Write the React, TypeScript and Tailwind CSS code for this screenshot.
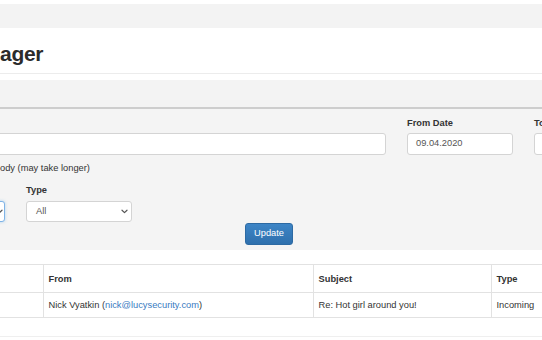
import React from "react";

function Chevron({ className }: { className?: string }) {
  return (
    <svg className={className} width="7" height="5" viewBox="0 0 7 5" fill="none">
      <path d="M1 1.2 L3.5 3.6 L6 1.2" stroke="#555" strokeWidth="1.2" strokeLinecap="round" strokeLinejoin="round" />
    </svg>
  );
}

function Label({ children }: { children: React.ReactNode }) {
  return <div className="text-[9.3px] font-bold leading-[13px] text-[#333] mb-[3px]">{children}</div>;
}

export default function App() {
  return (
    <div className="w-[542px] h-[340px] overflow-hidden bg-white text-[#333] font-['Liberation_Sans',Arial,sans-serif]">
      {/* ─── top bars ─────────────────────────────── */}
      <div className="h-[4px]" />
      <div className="h-[24px] bg-[#f3f3f3]" />
      <div className="h-[46px] border-b border-[#ececec] flex items-end">
        <h1 className="text-[21px] font-bold leading-none pb-[9px] text-[#2b2b2b] tracking-[-0.3px]">ager</h1>
      </div>
      <div className="h-[6px]" />
      <div className="h-[29px] bg-[#f3f3f3] border-b-2 border-[#cdcdcd]" />

      {/* ─── filter panel ─────────────────────────── */}
      <div className="h-[141px] bg-[#f4f4f4] pt-[8px]">
        <div className="flex gap-[21px]">
          <div className="-ml-[10px] w-[396px] shrink-0">
            <div className="h-[13px] mb-[3px]" />
            <div className="h-[22px] bg-white border border-[#d4d4d4] rounded-[3px]" />
            <div className="ml-[10px] mt-[7px] text-[9.3px] leading-[13px] text-[#333]">ody (may take longer)</div>
          </div>
          <div className="w-[106px] shrink-0">
            <Label>From Date</Label>
            <div className="h-[22px] bg-white border border-[#d4d4d4] rounded-[3px] flex items-center pl-[8px] text-[9.3px] text-[#555]">
              09.04.2020
            </div>
          </div>
          <div className="w-[80px] shrink-0">
            <Label>To</Label>
            <div className="h-[22px] bg-white border border-[#d4d4d4] rounded-[3px]" />
          </div>
        </div>

        <div className="flex gap-[21px] mt-[9px]">
          <div className="-ml-[100px] w-[105px] shrink-0">
            <div className="h-[13px] mb-[4px]" />
            <div className="h-[21px] bg-white border border-[#7fb3e6] rounded-[3px] flex items-center justify-end pr-[1px] shadow-[0_0_3px_rgba(102,175,233,0.5)]">
              <Chevron />
            </div>
          </div>
          <div className="w-[106px] shrink-0">
            <div className="text-[9.3px] font-bold leading-[13px] text-[#333] mb-[4px]">Type</div>
            <div className="h-[21px] bg-white border border-[#d4d4d4] rounded-[3px] flex items-center justify-between pl-[9px] pr-[3px] text-[9.3px] text-[#555]">
              <span>All</span>
              <Chevron />
            </div>
          </div>
        </div>

        <div className="ml-[245px] mt-[1px] w-[48px] h-[22px] rounded-[3px] bg-[linear-gradient(#3d85c6,#2f70ad)] border border-[#2d6aa3] flex items-center justify-center text-[9.3px] text-white">
          Update
        </div>
      </div>

      {/* ─── messages table ───────────────────────── */}
      <div className="h-[14px]" />
      <table className="border-collapse text-[9.3px] text-[#333] w-[600px] table-fixed">
        <colgroup>
          <col className="w-[43px]" />
          <col className="w-[270px]" />
          <col className="w-[178px]" />
          <col className="w-[109px]" />
        </colgroup>
        <thead>
          <tr className="h-[28px] border-t border-b border-[#e2e2e2]">
            <th className="border-r border-[#e2e2e2]" />
            <th className="text-left font-bold pl-[5px] pt-[2px] border-r border-[#e2e2e2]">From</th>
            <th className="text-left font-bold pl-[5px] pt-[2px] border-r border-[#e2e2e2]">Subject</th>
            <th className="text-left font-bold pl-[5px] pt-[2px]">Type</th>
          </tr>
        </thead>
        <tbody>
          <tr className="h-[25px] border-b border-[#e2e2e2]">
            <td className="border-r border-[#e2e2e2]" />
            <td className="pl-[5px] pt-[2px] border-r border-[#e2e2e2]">
              Nick Vyatkin (<span className="text-[#3a7bbf]">nick@lucysecurity.com</span>)
            </td>
            <td className="pl-[5px] pt-[2px] border-r border-[#e2e2e2]">Re: Hot girl around you!</td>
            <td className="pl-[5px] pt-[2px]">Incoming</td>
          </tr>
        </tbody>
      </table>
      <div className="h-[19px] border-b border-[#efefef]" />
    </div>
  );
}
